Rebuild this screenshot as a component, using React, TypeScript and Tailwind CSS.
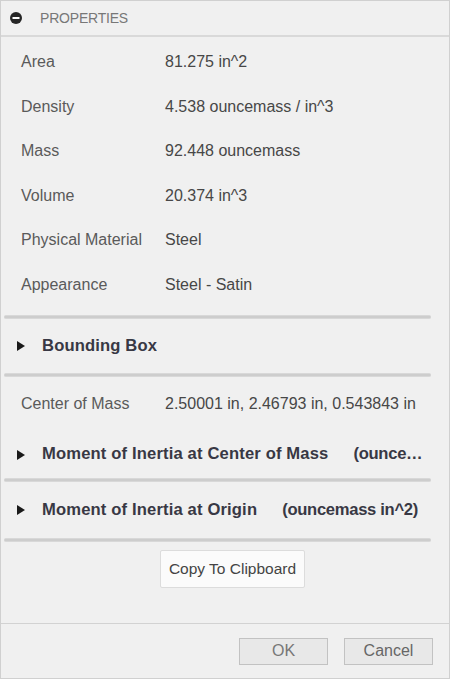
const rows = [
  { label: 'Area', value: '81.275 in^2' },
  { label: 'Density', value: '4.538 ouncemass / in^3' },
  { label: 'Mass', value: '92.448 ouncemass' },
  { label: 'Volume', value: '20.374 in^3' },
  { label: 'Physical Material', value: 'Steel' },
  { label: 'Appearance', value: 'Steel - Satin' },
]

function Separator() {
  return <div className="ml-[3px] w-[427px] h-[4px] rounded-full bg-[#cdcdcd] border-y border-[#d8d8d8]" />
}

function Triangle() {
  return (
    <svg width="8" height="10" viewBox="0 0 8 10" className="shrink-0">
      <path d="M0 0 L8 5 L0 10 Z" fill="#1a1a1a" />
    </svg>
  )
}

function Group({ title, note, h }: { title: string; note?: string; h: string }) {
  return (
    <div className={`${h} flex items-center pl-[16px] pr-[18px]`}>
      <Triangle />
      <div className="ml-[17px] font-bold text-[16.6px] tracking-[0.15px] text-[#383844] whitespace-pre overflow-hidden text-ellipsis">
        {title}
        {note && <span className="ml-[25px] tracking-[-0.3px]">{note}</span>}
      </div>
    </div>
  )
}

export default function App() {
  return (
    <div className="w-[450px] h-[679px] bg-[#f0f0f0] border border-[#d0d0d0] flex flex-col font-['Liberation_Sans',Arial,sans-serif] text-[16px]">
      <div className="h-[36px] shrink-0 flex items-center pl-[9px] border-b-2 border-[#d9d9d9]">
        <svg width="12" height="12" viewBox="0 0 12 12">
          <circle cx="6" cy="6" r="6" fill="#262626" />
          <rect x="2.5" y="5" width="7" height="2" fill="#ffffff" />
        </svg>
        <span className="ml-[18px] text-[14px] text-[#777777] tracking-[-0.2px]">PROPERTIES</span>
      </div>

      <div className="flex-1 flex flex-col pt-[3px]">
        {rows.map((r) => (
          <div key={r.label} className="h-[44.5px] flex items-center pl-[20px]">
            <span className="w-[144px] text-[#5a5a5a]">{r.label}</span>
            <span className="text-[#474747]">{r.value}</span>
          </div>
        ))}
        <div className="mt-[8px]">
          <Separator />
        </div>
        <Group title="Bounding Box" h="h-[54px]" />
        <Separator />
        <div className="h-[54px] flex items-center pl-[20px]">
          <span className="w-[144px] text-[#5a5a5a]">Center of Mass</span>
          <span className="text-[#474747]">2.50001 in, 2.46793 in, 0.543843 in</span>
        </div>
        <Group title="Moment of Inertia at Center of Mass" note="(ouncemass in^2)" h="h-[47px]" />
        <Separator />
        <Group title="Moment of Inertia at Origin" note="(ouncemass in^2)" h="h-[56px]" />
        <Separator />
        <button className="mt-[8px] ml-[159px] w-[145px] h-[38px] bg-[#fbfbfb] border border-[#dcdcdc] rounded-[2px] text-[15.5px] text-[#444444]">
          Copy To Clipboard
        </button>
      </div>

      <div className="h-[55px] shrink-0 flex items-center justify-end gap-[16px] pr-[16px] border-t border-[#d2d2d2]">
        <button className="w-[89px] h-[27px] bg-[#e8e8e8] border border-[#c2c2c2] text-[#777777] text-[16px]">OK</button>
        <button className="w-[89px] h-[27px] bg-[#e8e8e8] border border-[#c2c2c2] text-[#666666] text-[16px]">Cancel</button>
      </div>
    </div>
  )
}
